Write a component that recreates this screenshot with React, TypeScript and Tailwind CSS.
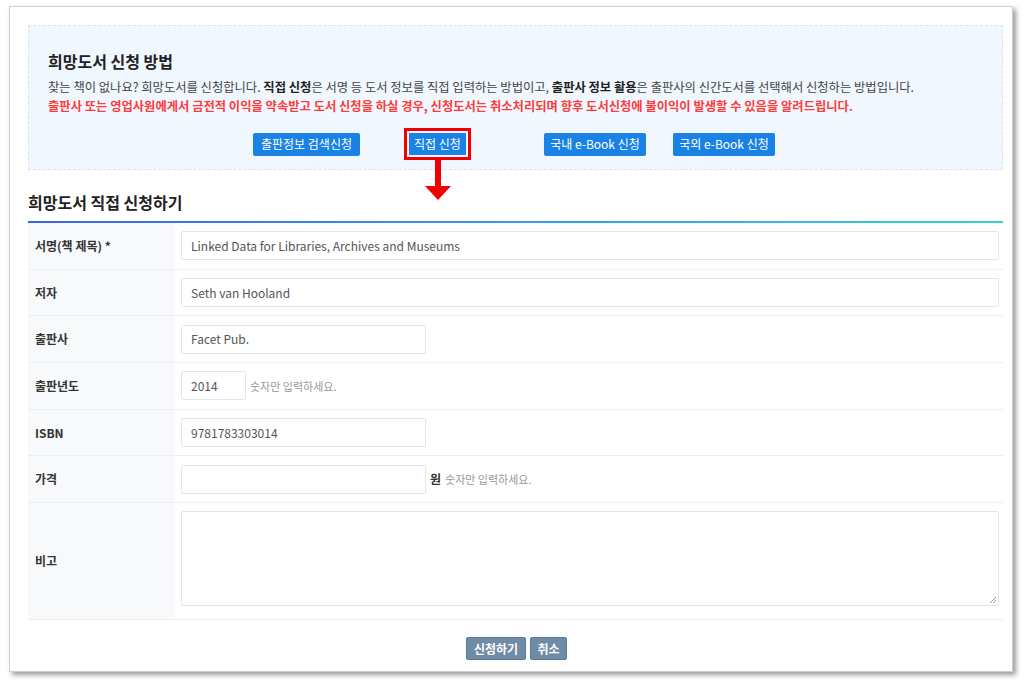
import React from "react";

const font = { fontFamily: '"Noto Sans CJK KR", "Noto Sans", sans-serif' };

type Row = {
  label: string;
  value?: string;
  width: string;
  hint?: string;
  unit?: string;
};

const rows: Row[] = [
  { label: "서명(책 제목) *", value: "Linked Data for Libraries, Archives and Museums", width: "w-[818px]" },
  { label: "저자", value: "Seth van Hooland", width: "w-[818px]" },
  { label: "출판사", value: "Facet Pub.", width: "w-[245px]" },
  { label: "출판년도", value: "2014", width: "w-[65px]", hint: "숫자만 입력하세요." },
  { label: "ISBN", value: "9781783303014", width: "w-[245px]" },
  { label: "가격", value: "", width: "w-[245px]", unit: "원", hint: "숫자만 입력하세요." },
];

const FormRow = ({ row }: { row: Row }) => (
  <div className="flex h-[46.7px] border-b border-[#eceff2]">
    <div className="w-[147px] shrink-0 bg-[#f7f9fb] flex items-center pl-[7px] text-[12px] font-bold text-[#333]">
      {row.label}
    </div>
    <div className="flex items-center pl-[6px] gap-[4px]">
      <div
        className={`${row.width} h-[29px] border border-[#e2e6ea] rounded-[2px] bg-white flex items-center px-[9px] text-[12px] text-[#555]`}
      >
        {row.value}
      </div>
      {row.unit && <span className="text-[12px] font-bold text-[#333]">{row.unit}</span>}
      {row.hint && <span className="text-[11px] text-[#999]">{row.hint}</span>}
    </div>
  </div>
);

export default function App() {
  return (
    <div className="w-[1024px] h-[687px] bg-white overflow-hidden" style={font}>
      <div className="relative ml-[9px] mt-[6px] w-[1004px] h-[666px] bg-white border border-[#cfcfcf] shadow-[3px_3px_5px_rgba(0,0,0,0.4)] pt-[18px] pl-[18px]">
        {/* guide box */}
        <div className="w-[975px] h-[145px] bg-[#f1f7fe] border border-dashed border-[#d6e4f3] pt-[23px] pl-[19px]">
          <h2 className="text-[16px] leading-[24px] font-bold text-[#222]">희망도서 신청 방법</h2>
          <p className="mt-[5px] text-[12.3px] leading-[19px] text-[#444] whitespace-nowrap">
            찾는 책이 없나요? 희망도서를 신청합니다. <b className="text-[#222]">직접 신청</b>은 서명 등 도서 정보를 직접 입력하는 방법이고,{" "}
            <b className="text-[#222]">출판사 정보 활용</b>은 출판사의 신간도서를 선택해서 신청하는 방법입니다.
          </p>
          <p className="text-[12.3px] leading-[19px] font-bold text-[#ff3b3b] whitespace-nowrap">
            출판사 또는 영업사원에게서 금전적 이익을 약속받고 도서 신청을 하실 경우, 신청도서는 취소처리되며 향후 도서신청에 불이익이 발생할 수 있음을 알려드립니다.
          </p>
          <div className="flex mt-[12px] pl-[205px] items-center">
            <span className="w-[107px] h-[23px] bg-[#1a82e4] rounded-[2px] text-white text-[12px] flex items-center justify-center">
              출판정보 검색신청
            </span>
            <span className="ml-[44px] border-[3px] border-[#f00000] p-[2px]">
              <span className="w-[57px] h-[22px] bg-[#1a82e4] text-white text-[12px] flex items-center justify-center">
                직접 신청
              </span>
            </span>
            <span className="ml-[73px] w-[102px] h-[23px] bg-[#1a82e4] rounded-[2px] text-white text-[12px] flex items-center justify-center">
              국내 e-Book 신청
            </span>
            <span className="ml-[27px] w-[102px] h-[23px] bg-[#1a82e4] rounded-[2px] text-white text-[12px] flex items-center justify-center">
              국외 e-Book 신청
            </span>
          </div>
        </div>

        {/* red arrow */}
        <svg className="absolute left-[414px] top-[150px]" width="28" height="44" viewBox="0 0 28 44">
          <rect x="11" y="0" width="6" height="30" fill="#f00000" />
          <polygon points="1,29 27,29 14,43" fill="#f00000" />
        </svg>

        <h3 className="mt-[20px] text-[16px] leading-[24px] font-bold text-[#222]">희망도서 직접 신청하기</h3>
        <div className="mt-[7px] w-[975px] h-[2px] bg-gradient-to-r from-[#3a66e0] to-[#37d3d6]" />

        <div className="w-[975px]">
          {rows.map((r) => (
            <FormRow key={r.label} row={r} />
          ))}
          <div className="flex h-[117px] border-b border-[#eceff2]">
            <div className="w-[147px] shrink-0 bg-[#f7f9fb] flex items-center pl-[7px] text-[12px] font-bold text-[#333]">
              비고
            </div>
            <div className="pl-[6px] pt-[8px]">
              <div className="relative w-[818px] h-[95px] border border-[#e2e6ea] rounded-[2px] bg-white">
                <svg className="absolute right-[1px] bottom-[1px]" width="8" height="8" viewBox="0 0 8 8">
                  <line x1="7" y1="1" x2="1" y2="7" stroke="#999" strokeWidth="1" />
                  <line x1="7" y1="4" x2="4" y2="7" stroke="#999" strokeWidth="1" />
                </svg>
              </div>
            </div>
          </div>
        </div>

        <div className="flex justify-center gap-[4px] mt-[17px] w-[975px] pl-[2px]">
          <span className="w-[60px] h-[23px] bg-[#6e8ba7] border border-[#5d7a96] rounded-[2px] text-white text-[12px] font-bold flex items-center justify-center">
            신청하기
          </span>
          <span className="w-[37px] h-[23px] bg-[#6e8ba7] border border-[#5d7a96] rounded-[2px] text-white text-[12px] font-bold flex items-center justify-center">
            취소
          </span>
        </div>
      </div>
    </div>
  );
}
